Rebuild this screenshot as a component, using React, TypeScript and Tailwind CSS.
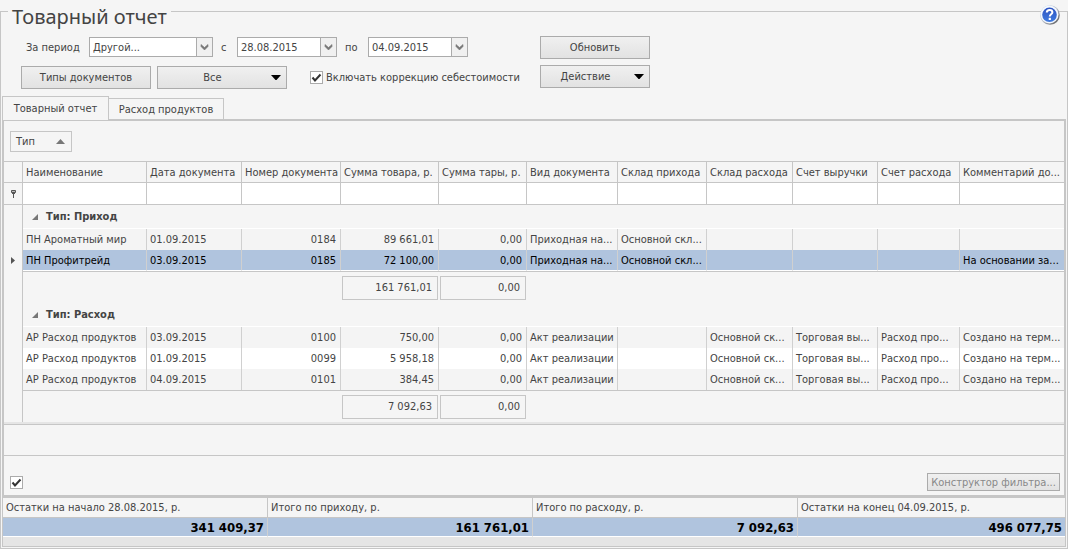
import React from "react";

interface Column {
    title: string;
    width?: number;
    numeric?: boolean;
}

interface Group {
    title: string;
    rows: string[][];
    total: string;
    tareTotal: string;
}

const columns: Column[] = [
    { title: "Наименование", width: 124 },
    { title: "Дата документа", width: 95 },
    { title: "Номер документа", width: 99, numeric: true },
    { title: "Сумма товара, р.", width: 98, numeric: true },
    { title: "Сумма тары, р.", width: 88, numeric: true },
    { title: "Вид документа", width: 91 },
    { title: "Склад прихода", width: 89 },
    { title: "Склад расхода", width: 86 },
    { title: "Счет выручки", width: 85 },
    { title: "Счет расхода", width: 82 },
    { title: "Комментарий до..." }
];

const groups: Group[] = [
    {
        title: "Тип: Приход",
        rows: [
            ["ПН Ароматный мир", "01.09.2015", "0184", "89 661,01", "0,00", "Приходная на...", "Основной скл...", "", "", "", ""],
            ["ПН Профитрейд", "03.09.2015", "0185", "72 100,00", "0,00", "Приходная на...", "Основной скл...", "", "", "", "На основании за..."]
        ],
        total: "161 761,01",
        tareTotal: "0,00"
    },
    {
        title: "Тип: Расход",
        rows: [
            ["АР Расход продуктов", "03.09.2015", "0100", "750,00", "0,00", "Акт реализации", "", "Основной ск...", "Торговая вы...", "Расход про...", "Создано на терм..."],
            ["АР Расход продуктов", "01.09.2015", "0099", "5 958,18", "0,00", "Акт реализации", "", "Основной ск...", "Торговая вы...", "Расход про...", "Создано на терм..."],
            ["АР Расход продуктов", "04.09.2015", "0101", "384,45", "0,00", "Акт реализации", "", "Основной ск...", "Торговая вы...", "Расход про...", "Создано на терм..."]
        ],
        total: "7 092,63",
        tareTotal: "0,00"
    }
];

const totals = [
    { label: "Остатки на начало 28.08.2015, р.", value: "341 409,37" },
    { label: "Итого по приходу, р.", value: "161 761,01" },
    { label: "Итого по расходу, р.", value: "7 092,63" },
    { label: "Остатки на конец 04.09.2015, р.", value: "496 077,75" }
];

const SELECTED_ROW = "0185";

const buttonClass = "border border-[#ababab] bg-linear-to-b from-[#f0f0f0] to-[#e2e2e2]";

const Chevron: React.FC = () => (
    <svg width="9" height="7" viewBox="0 0 9 7" aria-hidden="true">
        <path d="M1 0.5v2L4.5 6 8 2.500v-2L4.500 3.500z" fill="#777" stroke="#777" strokeWidth="0.600" />
    </svg>
);

const Caret: React.FC = () => (
    <svg width="10" height="5" viewBox="0 0 10 5" aria-hidden="true">
        <path d="M0 0h10L5.500 5h-1z" fill="#000" />
    </svg>
);

const DateBox: React.FC<{ label: string; value: string }> = ({ label, value }) => (
    <div className="flex h-5 w-[100px] border border-[#ababab] bg-white">
        <input aria-label={label} defaultValue={value} className="w-full min-w-0 flex-1 pl-[3px] outline-none" />
        <button aria-label="Открыть календарь" className="flex w-4 items-center justify-center border-l border-[#ababab] bg-[#f0f0f0]">
            <Chevron />
        </button>
    </div>
);

const CheckBox: React.FC<{ id?: string; label?: string }> = ({ id, label }) => (
    <span className="relative flex size-[13px]">
        <input
            id={id}
            type="checkbox"
            defaultChecked
            aria-label={label}
            className="peer size-[13px] appearance-none border border-[#ababab] bg-white"
        />
        <svg
            width="13"
            height="13"
            viewBox="0 0 13 13"
            className="pointer-events-none absolute inset-0 hidden peer-checked:block"
            aria-hidden="true"
        >
            <path d="M2.500 6.500L5 9.500 10.500 3.500" fill="none" stroke="#333" strokeWidth="2" />
        </svg>
    </span>
);

const HelpIcon: React.FC = () => (
    <svg width="20" height="20" viewBox="0 0 20 20" aria-hidden="true">
        <defs>
            <linearGradient id="ring" x1="0" y1="0" x2="1" y2="1">
                <stop offset="0" stopColor="#b9dcfa" />
                <stop offset="0.500" stopColor="#b5b9c2" />
                <stop offset="1" stopColor="#4c4c4c" />
            </linearGradient>
            <linearGradient id="ball" x1="0" y1="0" x2="0" y2="1">
                <stop offset="0" stopColor="#2c52c0" />
                <stop offset="1" stopColor="#3f7be0" />
            </linearGradient>
        </defs>
        <circle cx="10" cy="10" r="9.800" fill="url(#ring)" />
        <circle cx="9.500" cy="9.500" r="9" fill="#f4f8fe" />
        <circle cx="9.500" cy="9.800" r="7.300" fill="url(#ball)" />
        <path
            d="M6.800 7.600C6.800 5.800 8 4.900 9.600 4.900s2.800 0.900 2.800 2.400c0 1.900-2.600 2.100-2.600 4.100"
            fill="none"
            stroke="#fff"
            strokeWidth="2"
        />
        <rect x="8.700" y="12.800" width="2.200" height="2.200" fill="#fff" />
    </svg>
);

const cellAlign = (column: Column) => (column.numeric ? "pr-1 text-right" : "pr-[3px] text-left");

const DocumentGrid: React.FC = () => (
    <table className="w-full table-fixed border-separate border-spacing-0 whitespace-nowrap">
        <colgroup>
            <col className="w-[19px]" />
            {columns.map(c => (
                <col key={c.title} style={{ width: c.width }} />
            ))}
        </colgroup>
        <thead>
            <tr className="h-[22px]">
                <th className="border-y border-r border-[#c6c6c6]" />
                {columns.map(c => (
                    <th
                        key={c.title}
                        className="overflow-hidden border-y border-r border-[#c6c6c6] pl-[3px] text-left font-normal last:border-r-0"
                    >
                        {c.title}
                    </th>
                ))}
            </tr>
            <tr className="h-[22px]">
                <td className="border-r border-b border-[#c6c6c6]">
                    <svg width="5" height="8" viewBox="0 0 5 8" className="mx-auto" aria-hidden="true">
                        <path d="M0.500 0.500h4v2h-4zM1 3.500h3M2.500 3v5" fill="#bbb" stroke="#555" />
                    </svg>
                </td>
                {columns.map(c => (
                    <td key={c.title} className="border-r border-b border-[#c6c6c6] bg-white last:border-r-0">
                        <input aria-label={"Фильтр: " + c.title} className="block h-5 w-full px-[3px] outline-none" />
                    </td>
                ))}
            </tr>
        </thead>
        {groups.map(group => (
            <tbody key={group.title}>
                <tr className="h-6">
                    <td className="border-r border-[#c6c6c6]" />
                    <th colSpan={columns.length} className="border-b border-white pl-[9px] text-left font-bold">
                        <span className="flex items-center gap-2">
                            <svg width="6" height="6" viewBox="0 0 6 6" aria-hidden="true">
                                <path d="M6 0v6H0z" fill="#777" />
                            </svg>
                            {group.title}
                        </span>
                    </th>
                </tr>
                {group.rows.map((row, index) => {
                    const selected = row[2] === SELECTED_ROW;
                    const look = selected
                        ? "bg-[#b0c4de] text-black border-b border-b-white"
                        : index % 2 === 1
                          ? "bg-white"
                          : "bg-[#f4f4f4]";
                    return (
                        <tr key={row[2]} className="h-[21px]">
                            <td className="border-r border-[#c6c6c6]">
                                {selected && (
                                    <svg width="4" height="7" viewBox="0 0 4 7" className="mx-auto" aria-hidden="true">
                                        <path d="M0 0l4 3.500L0 7z" fill="#555" />
                                    </svg>
                                )}
                            </td>
                            {columns.map((c, i) => (
                                <td
                                    key={c.title}
                                    className={`overflow-hidden border-r border-r-[#d0d0d0] pl-[3px] last:border-r-0 ${cellAlign(c)} ${look}`}
                                >
                                    {row[i]}
                                </td>
                            ))}
                        </tr>
                    );
                })}
                <tr className="h-8">
                    <td className="border-r border-[#c6c6c6]" />
                    <td colSpan={3} className="border-t border-[#c6c6c6]" />
                    {[group.total, group.tareTotal].map((value, i) => (
                        <td key={i} className="border-t border-[#c6c6c6] px-px">
                            <div className="h-6 border border-[#c6c6c6] pr-[5px] text-right leading-[22px]">{value}</div>
                        </td>
                    ))}
                    <td colSpan={6} className="border-t border-[#c6c6c6]" />
                </tr>
            </tbody>
        ))}
    </table>
);

const App: React.FC = () => (
    <main className="bg-[#f5f5f5] font-['DejaVu_Sans_Condensed','DejaVu_Sans',sans-serif] text-[11px] leading-[15px] text-[#444] [font-stretch:condensed]">
        <fieldset className="relative border border-[#c6c6c6] p-px pt-0">
            <legend className="ml-[6px] h-[23px] px-1 font-['Noto_Sans',sans-serif] text-[20px] leading-[34px]">Товарный отчет</legend>
            <button aria-label="Справка" className="absolute top-[-18px] right-[7px]">
                <HelpIcon />
            </button>

            <div className="flex pt-[13px] pl-[19px]">
                <div className="flex w-[519px] flex-col gap-[9px] pt-px">
                    <div className="flex items-center">
                        <label htmlFor="period" className="w-[68px] pl-[5px]">
                            За период
                        </label>
                        <div className="relative h-5 w-[124px]">
                            <select
                                id="period"
                                className="size-full appearance-none border border-[#ababab] bg-white pl-[3px] outline-none"
                            >
                                <option>Другой...</option>
                            </select>
                            <span className="pointer-events-none absolute inset-y-px right-px flex w-4 items-center justify-center border-l border-[#ababab] bg-[#f0f0f0]">
                                <Chevron />
                            </span>
                        </div>
                        <span className="w-6 pl-2">с</span>
                        <DateBox label="Начало периода" value="28.08.2015" />
                        <span className="w-[31px] pl-2">по</span>
                        <DateBox label="Конец периода" value="04.09.2015" />
                    </div>
                    <div className="flex items-center">
                        <button className={`h-[23px] w-[130px] ${buttonClass}`}>Типы документов</button>
                        <button className={`ml-[6px] flex h-[23px] w-[130px] items-center pr-[5px] ${buttonClass}`}>
                            <span className="flex-1 pr-1">Все</span>
                            <Caret />
                        </button>
                        <div className="ml-[23px] flex items-center gap-[3px]">
                            <CheckBox id="cost-correction" />
                            <label htmlFor="cost-correction">Включать коррекцию себестоимости</label>
                        </div>
                    </div>
                </div>
                <div className="flex w-[110px] flex-col gap-[6px]">
                    <button className={`h-[23px] ${buttonClass}`}>Обновить</button>
                    <button className={`flex h-[23px] items-center pr-[5px] ${buttonClass}`}>
                        <span className="flex-1 pr-1">Действие</span>
                        <Caret />
                    </button>
                </div>
            </div>

            <div role="tablist" className="mt-[7px] flex items-end">
                <button
                    role="tab"
                    aria-selected="true"
                    className="relative -mb-px h-6 w-[107px] border border-b-0 border-[#c6c6c6] bg-[#f5f5f5]"
                >
                    Товарный отчет
                </button>
                <button role="tab" aria-selected="false" className="h-[21px] w-[115px] border border-b-0 border-l-0 border-[#c6c6c6]">
                    Расход продуктов
                </button>
            </div>

            <section className="border-2 border-b-3 border-[#c6c6c6]">
                <div className="px-[6px] py-[9px] pt-[10px]">
                    <button className="flex h-[21px] w-[62px] items-center justify-between border border-[#c6c6c6] pr-[6px] pl-[5px]">
                        Тип
                        <svg width="9" height="5" viewBox="0 0 9 5" aria-hidden="true">
                            <path d="M4.500 0L9 5H0z" fill="#777" />
                        </svg>
                    </button>
                </div>
                <DocumentGrid />
                <div className="h-[2px] bg-[#e5e5e5]" />
                <div className="h-8 border-y border-[#c6c6c6]" />
                <div className="flex h-[39px] items-end justify-between pr-1 pb-1 pl-[6px]">
                    <div className="pb-[2px]">
                        <CheckBox label="Фильтр включен" />
                    </div>
                    <button disabled className={`h-[18px] w-[133px] text-[#888] ${buttonClass}`}>
                        Конструктор фильтра...
                    </button>
                </div>
            </section>

            <div className="border-x border-[#c6c6c6]">
                <table className="w-full table-fixed border-separate border-spacing-0">
                    <thead>
                        <tr className="h-5">
                            {totals.map(t => (
                                <th
                                    key={t.label}
                                    className="w-[265px] border-r border-b border-[#c6c6c6] pl-[3px] text-left font-normal last:w-auto last:border-r-0"
                                >
                                    {t.label}
                                </th>
                            ))}
                        </tr>
                    </thead>
                    <tbody>
                        <tr className="h-[19px]">
                            {totals.map(t => (
                                <td
                                    key={t.label}
                                    className="border-r border-b border-r-[#d0d0d0] border-b-white bg-[#b0c4de] pr-[3px] text-right text-[13px] font-bold text-black last:border-r-0"
                                >
                                    {t.value}
                                </td>
                            ))}
                        </tr>
                    </tbody>
                </table>
                <div className="h-[10px] border-b border-[#c6c6c6] bg-[#e5e5e5]" />
            </div>
        </fieldset>
    </main>
);

export default App;
